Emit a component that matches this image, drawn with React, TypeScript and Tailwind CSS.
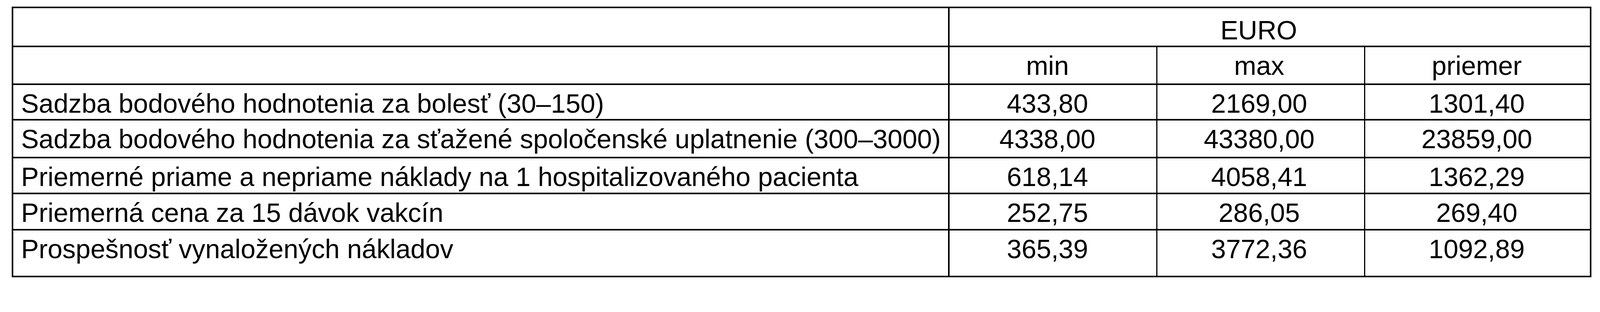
import React from 'react';

const rows = [
  { label: 'Sadzba bodového hodnotenia za bolesť (30–150)', min: '433,80', max: '2169,00', avg: '1301,40', h: 'h-[91px]' },
  { label: 'Sadzba bodového hodnotenia za sťažené spoločenské uplatnenie (300–3000)', min: '4338,00', max: '43380,00', avg: '23859,00', h: 'h-[97px]' },
  { label: 'Priemerné priame a nepriame náklady na 1 hospitalizovaného pacienta', min: '618,14', max: '4058,41', avg: '1362,29', h: 'h-[92px]' },
  { label: 'Priemerná cena za 15 dávok vakcín', min: '252,75', max: '286,05', avg: '269,40', h: 'h-[93px]' },
  { label: 'Prospešnosť vynaložených nákladov', min: '365,39', max: '3772,36', avg: '1092,89', h: 'h-[120px]' },
];

const App = () => {
  return (
    <div className="w-full min-h-[755px] bg-white pl-[30px] pt-[17px] font-['Liberation_Sans',Arial,sans-serif] text-[68px] leading-[76px] text-black">
      <div className="grid w-[4044px] grid-cols-[2397px_532px_532px_579px] border-l-4 border-t-4 border-black">
        {/* Header row 1 */}
        <div className="h-[100px] border-b-4 border-r-4 border-black" />
        <div className="col-span-3 h-[100px] border-b-4 border-r-4 border-black pt-[18px] pr-[56px] text-center">EURO</div>

        {/* Header row 2 */}
        <div className="h-[97px] border-b-4 border-r-4 border-black" />
        <div className="h-[97px] border-b-4 border-r-[3px] border-black pt-[9px] pr-[28px] text-center">min</div>
        <div className="h-[97px] border-b-4 border-r-[3px] border-black pt-[9px] pr-[8px] text-center">max</div>
        <div className="h-[97px] border-b-4 border-r-4 border-black pt-[9px] pr-[4px] text-center">priemer</div>

        {/* Data rows */}
        {rows.map((r, i) => (
          <React.Fragment key={i}>
            <div className={`${r.h} border-b-4 border-r-4 border-black pl-[20px] pt-[9px] whitespace-nowrap`}>{r.label}</div>
            <div className={`${r.h} border-b-4 border-r-[3px] border-black pt-[9px] pr-[28px] text-center`}>{r.min}</div>
            <div className={`${r.h} border-b-4 border-r-[3px] border-black pt-[9px] pr-[8px] text-center`}>{r.max}</div>
            <div className={`${r.h} border-b-4 border-r-4 border-black pt-[9px] pr-[4px] text-center`}>{r.avg}</div>
          </React.Fragment>
        ))}
      </div>
    </div>
  );
};

export default App;
